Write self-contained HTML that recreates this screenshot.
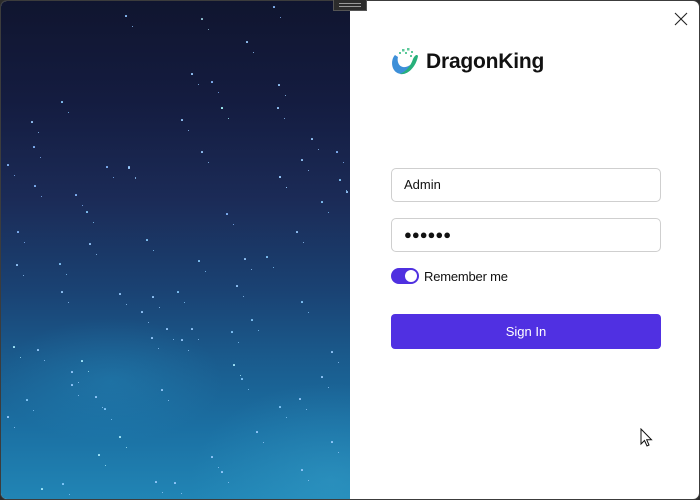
<!DOCTYPE html>
<html><head><meta charset="utf-8"><style>
html,body{margin:0;padding:0;width:700px;height:500px;overflow:hidden;background:#2b2b2b;font-family:"Liberation Sans",sans-serif}
.win{position:absolute;left:0;top:0;width:698px;height:498px;border:1px solid #3c3c3c;border-radius:7px;overflow:hidden;background:#fff}
.left{position:absolute;left:0;top:0;width:349px;height:498px;overflow:hidden;
background:
radial-gradient(ellipse 160px 90px at 110px 380px,rgba(40,150,200,.3),transparent 70%),
radial-gradient(ellipse 200px 140px at 330px 480px,rgba(60,170,210,.35),transparent 70%),
linear-gradient(180deg,#10152f 0%,#141c40 20%,#1b2b57 40%,#1a4273 58%,#1a5b8d 72%,#1b70a3 86%,#2185b5 100%);}
.stars{position:absolute;left:0;top:0;width:1.5px;height:1.5px;border-radius:50%;background:transparent;
box-shadow:
124px 14px #8fc4ff,200px 17px #9cd,272px 5px #8bf,190px 72px #9cf,210px 80px #8bf,277px 83px #9cf,220px 106px #aff,180px 118px #9cf,
310px 137px #9cf,30px 120px #9cf,6px 163px #8bf,127px 165px #9cf,32px 145px #8bf,105px 165px #8bf,278px 175px #9cf,300px 158px #9cf,
335px 150px #8bf,276px 106px #9cf,33px 184px #8bf,74px 193px #8bf,127px 166px #9cf,225px 212px #8bf,278px 175px #9cf,345px 190px #9cf,
16px 230px #8bf,88px 242px #9cf,145px 238px #8cf,15px 263px #9cf,58px 262px #8cf,197px 259px #8cf,243px 257px #9cf,265px 255px #8cf,
295px 230px #9cf,320px 200px #8cf,338px 178px #8cf,60px 290px #9cf,118px 292px #9cf,151px 295px #9cf,176px 290px #8cf,235px 284px #9cf,
12px 345px #aef,36px 348px #9cf,80px 359px #aef,70px 370px #9cf,165px 327px #9cf,150px 336px #9cf,232px 363px #aef,180px 338px #9cf,
240px 377px #8cf,70px 383px #9cf,94px 395px #9cf,160px 388px #9cf,25px 398px #8cf,6px 415px #9cf,298px 397px #9cf,320px 375px #9cf,
103px 407px #8cf,118px 435px #aef,97px 453px #aef,154px 480px #9cf,40px 487px #aef,61px 482px #8cf,173px 481px #9cf,210px 455px #9cf,
255px 430px #9cf,278px 405px #8cf,300px 468px #9cf,330px 440px #9cf,220px 470px #9cf,180px 500px #9cf,190px 327px #9cf,230px 330px #8cf,
300px 300px #8cf,330px 350px #9cf,140px 310px #9cf,250px 318px #8cf,85px 210px #8cf,200px 150px #9cf,60px 100px #8cf,245px 40px #9cf;}
.stars.b{width:1px;height:1px;transform:translate(7px,11px)}
.grip{position:absolute;left:333px;top:0;width:34px;height:11px;background:#2c2c2c;border:1px solid #555;border-top:0;box-sizing:border-box}
.grip:before,.grip:after{content:"";position:absolute;left:5px;right:5px;height:1px;background:#999;top:3px}
.grip:after{top:6px}
.close{position:absolute;left:673px;top:11px}
.logo{position:absolute;left:389px;top:45px}
.brand{position:absolute;left:425px;top:49px;font-size:21px;font-weight:bold;color:#111;letter-spacing:-0.2px}
.inp{position:absolute;left:390px;width:270px;height:34px;border:1px solid #cfcfcf;border-radius:5px;box-sizing:border-box;font-size:13px;color:#111;padding-left:12px;line-height:32px}
.tog{position:absolute;left:390px;top:267px;width:28px;height:16px;border-radius:8px;background:#4f30e0}
.tog:after{content:"";position:absolute;right:2px;top:2px;width:12px;height:12px;border-radius:50%;background:#fff}
.rem{position:absolute;left:423px;top:268px;font-size:13px;color:#111;letter-spacing:-0.2px}
.btn{position:absolute;left:390px;top:313px;width:270px;height:35px;border-radius:4px;background:#5030e2;color:#fff;font-size:13px;text-align:center;line-height:35px}
</style></head><body>
<div class="win">
<div class="left"><div class="stars"></div><div class="stars b"></div></div>
<svg class="close" width="14" height="14" viewBox="0 0 14 14"><path d="M1 1L13 13M13 1L1 13" stroke="#222" stroke-width="1.1"/></svg>
<svg class="logo" width="30" height="30" viewBox="0 0 30 30">
<path d="M5 9C0 14 1 27 11 28C18 29 25 21 28 10C24 17 18 22 13 21C8 20 7 14 8 11Z" fill="#3d8fd8"/>
<path d="M28 10C26 21 18 29 10 28C17 25 21 19 23 13C25 9 27 8 28 10Z" fill="#27b07a"/>
<rect x="12" y="3" width="2.5" height="2.5" fill="#5cc99a"/><rect x="17" y="2" width="2.5" height="2.5" fill="#5cc99a"/><rect x="21" y="5" width="2" height="2" fill="#5cc99a"/><rect x="15" y="6" width="2" height="2" fill="#5cc99a"/><rect x="9" y="6" width="2" height="2" fill="#5cc99a"/><rect x="20" y="9" width="2" height="2" fill="#5cc99a"/>
</svg>
<div class="brand">DragonKing</div>
<div class="inp" style="top:167px">Admin</div>
<div class="inp" style="top:217px;font-size:13px;letter-spacing:0">●●●●●●</div>
<div class="tog"></div><div class="rem">Remember me</div>
<div class="btn">Sign In</div>
<svg style="position:absolute;left:639px;top:427px" width="14" height="20" viewBox="0 0 14 20"><path d="M1 1V16L4.5 12.5L7 18L9 17L6.7 11.8H11.5Z" fill="#fff" stroke="#111" stroke-width="1"/></svg>
</div>
<div class="grip"></div>
</body></html>
